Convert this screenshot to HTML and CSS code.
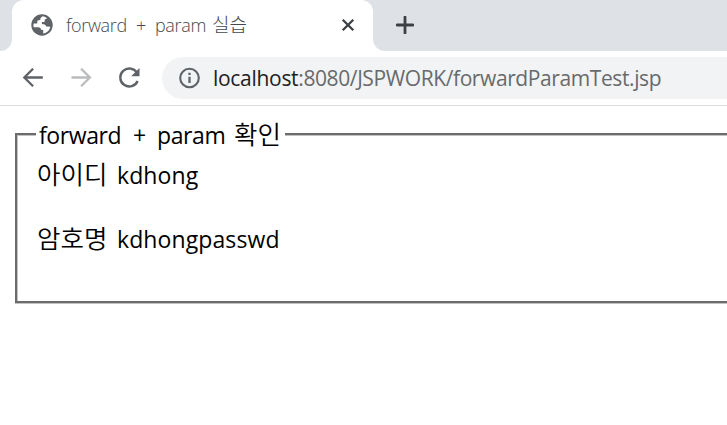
FILE: index.html
```html
<!DOCTYPE html>
<html lang="ko">
<head>
<meta charset="utf-8">
<title>forward + param 실습</title>
<link rel="stylesheet" href="styles.css">
</head>
<body>
<header class="tabs">
  <div class="strip-left"></div>
  <div class="tab-wrap">
    <div class="tab">
      <svg class="globe" width="22" height="22" viewBox="0 0 22 22"><circle cx="11" cy="11" r="10.7" fill="#5f6368"/><path d="M11.8 2.3C10 3.2 9.2 4.4 9.3 6.1L6.5 6.5 6.2 9.6 2.7 9.4C2.2 11 2.4 12.4 2.8 13.2H7.2C9 13.2 10.1 14.1 10 15.7L12.2 16V19.5C16 19.1 18.8 16 19.3 12.8L15.2 12.4C14.5 10.7 13.3 10 11 10L10.8 8H13.5L13.8 5.4 16 4.6C14.9 3.2 13.3 2.3 11.8 2.3Z" fill="#fff"/></svg>
      <div class="title"><span class="w1">forward</span> <span class="w2">+</span> <span class="w3">param</span> <span class="ko">실습</span></div>
      <svg class="close" width="14" height="14" viewBox="0 0 14 14"><path d="M1.7 1.7 12.3 12.3M12.3 1.7 1.7 12.3" stroke="#3c4043" stroke-width="2.3"/></svg>
    </div>
  </div>
  <div class="strip-right">
    <svg width="18" height="18" viewBox="0 0 18 18"><path d="M9 1V17M1 9H17" stroke="#3c4043" stroke-width="2.8" stroke-linecap="round"/></svg>
  </div>
</header>
<nav class="toolbar">
  <svg class="back" width="22" height="20" viewBox="0 0 22 20"><path d="M20.8 9.5H2.6M11.1.7 2.3 9.5l8.8 8.8" fill="none" stroke="#5f6368" stroke-width="2.3"/></svg>
  <svg class="next" width="22" height="20" viewBox="0 0 22 20"><path d="M.5 9.5h18.1M10.1.7l8.8 8.8-8.8 8.8" fill="none" stroke="#babcbe" stroke-width="2.3"/></svg>
  <svg class="reload" width="22" height="22" viewBox="0 0 22 22"><path d="M18.1 6A9 9 0 1 0 18.6 14" fill="none" stroke="#5f6368" stroke-width="2.4"/><path d="M20.5 1V9.2H12.2Z" fill="#5f6368"/></svg>
  <div class="address">
    <svg width="22" height="22" viewBox="0 0 22 22"><circle cx="10.5" cy="11" r="9.3" fill="none" stroke="#5f6368" stroke-width="2.1"/><path d="M10.5 9.7V16M10.5 5.8V8" stroke="#5f6368" stroke-width="2.3"/></svg>
    <div class="url"><span class="host">localhost</span><span class="path">:8080/JSPWORK/forwardParamTest.jsp</span></div>
  </div>
</nav>
<main>
  <fieldset>
    <legend><span class="w1">forward</span> <span class="w2">+</span> <span class="w3">param</span> <span class="ko">확인</span></legend>
    <p><span class="ko">아이디</span> <span class="value">kdhong</span></p>
    <p><span class="ko">암호명</span> <span class="value">kdhongpasswd</span></p>
  </fieldset>
</main>
</body>
</html>
```
FILE: styles.css
```css
* { box-sizing: border-box; }
body { margin: 0; width: 727px; height: 425px; overflow: hidden; background: #fff; color: #000; font-family: "Open Sans", "Noto Sans CJK KR", sans-serif; }
svg { display: block; flex: none; }
.ko { font-family: "Noto Sans CJK KR", sans-serif; font-weight: 300; }
.tabs { display: flex; height: 51px; }
.strip-left { width: 12px; background: #dee1e6; border-bottom-right-radius: 12px; }
.tab-wrap { width: 361px; background: #dee1e6; }
.tab { display: flex; align-items: center; height: 51px; padding: 0 18px 1px 19px; background: #fff; border-radius: 12px 12px 0 0; }
.title { display: flex; flex: 1; margin: -1px 0 0 13px; color: #45484c; font-size: 18px; font-weight: 350; line-height: 24px; letter-spacing: -0.35px; white-space: nowrap; }
.title .w1 { width: 70px; }
.title .w2 { width: 19px; }
.title .w3 { width: 57px; }
.title .ko { margin-top: -1px; font-size: 19px; letter-spacing: 0; }
.strip-right { flex: 1; padding: 16px 0 0 23px; background: #dee1e6; border-bottom-left-radius: 12px; }
.toolbar { display: flex; align-items: center; height: 55px; padding: 0 0 1px 22px; border-bottom: 1px solid #dadce0; }
.next { margin-left: 27px; }
.reload { margin-left: 26px; }
.address { display: flex; align-items: center; flex: 1; height: 42px; margin-left: 21px; padding-left: 17px; background: #f1f3f4; border-radius: 21px 0 0 21px; }
.url { margin-left: 12px; font-size: 21px; line-height: 28px; white-space: nowrap; }
.host { color: #202124; letter-spacing: -0.3px; }
.path { color: #686a6d; letter-spacing: -0.4px; }
main { padding: 12px 0 0 15px; }
fieldset { width: 740px; height: 185px; margin: 0; padding: 0 0 0 20px; border: 2px solid #6c6c6c; box-shadow: inset 1px 1px #c2c2c2, 0 1px #c2c2c2; font-size: 23px; }
legend { display: flex; width: 249px; height: 32px; margin-left: -1px; padding: 0 3px; background: #fff; line-height: 34px; letter-spacing: -0.4px; white-space: nowrap; }
legend .w1 { width: 94px; }
legend .w2 { width: 24px; }
legend .w3 { width: 77px; }
p { display: flex; height: 32px; margin: 9px 0 32px; line-height: 32px; white-space: nowrap; }
legend .ko, p .ko { margin-top: -2px; font-size: 25.5px; font-weight: 350; letter-spacing: 0; }
p .ko { width: 80px; }
.value { letter-spacing: 0.1px; }
```
